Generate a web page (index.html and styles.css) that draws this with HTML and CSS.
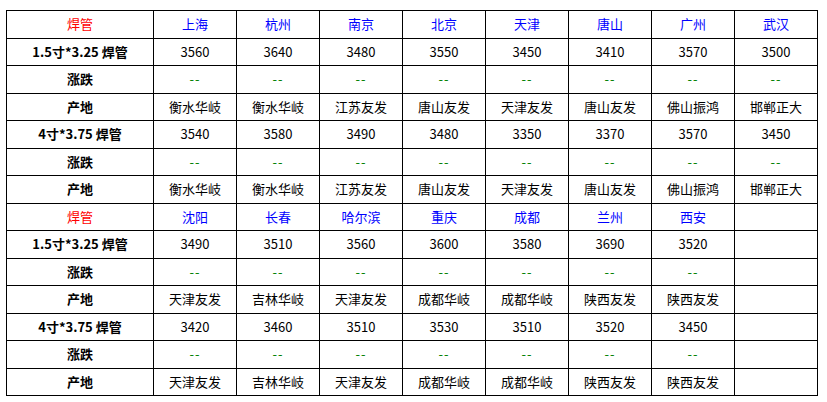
FILE: index.html
```html
<!DOCTYPE html>
<html lang="zh-CN">
<head>
<meta charset="utf-8">
<title>焊管价格</title>
<link rel="stylesheet" href="styles.css">
</head>
<body>
<table class="price-table">
  <colgroup>
    <col class="col-label">
    <col class="col-city"><col class="col-city"><col class="col-city"><col class="col-city">
    <col class="col-city"><col class="col-city"><col class="col-city"><col class="col-city">
  </colgroup>
  <tbody>
    <tr>
      <td class="head">焊管</td>
      <td class="city">上海</td><td class="city">杭州</td><td class="city">南京</td><td class="city">北京</td>
      <td class="city">天津</td><td class="city">唐山</td><td class="city">广州</td><td class="city">武汉</td>
    </tr>
    <tr>
      <td class="label">1.5寸*3.25 焊管</td>
      <td>3560</td><td>3640</td><td>3480</td><td>3550</td><td>3450</td><td>3410</td><td>3570</td><td>3500</td>
    </tr>
    <tr>
      <td class="label">涨跌</td>
      <td class="chg">--</td><td class="chg">--</td><td class="chg">--</td><td class="chg">--</td>
      <td class="chg">--</td><td class="chg">--</td><td class="chg">--</td><td class="chg">--</td>
    </tr>
    <tr>
      <td class="label">产地</td>
      <td>衡水华岐</td><td>衡水华岐</td><td>江苏友发</td><td>唐山友发</td><td>天津友发</td><td>唐山友发</td><td>佛山振鸿</td><td>邯郸正大</td>
    </tr>
    <tr>
      <td class="label">4寸*3.75 焊管</td>
      <td>3540</td><td>3580</td><td>3490</td><td>3480</td><td>3350</td><td>3370</td><td>3570</td><td>3450</td>
    </tr>
    <tr>
      <td class="label">涨跌</td>
      <td class="chg">--</td><td class="chg">--</td><td class="chg">--</td><td class="chg">--</td>
      <td class="chg">--</td><td class="chg">--</td><td class="chg">--</td><td class="chg">--</td>
    </tr>
    <tr>
      <td class="label">产地</td>
      <td>衡水华岐</td><td>衡水华岐</td><td>江苏友发</td><td>唐山友发</td><td>天津友发</td><td>唐山友发</td><td>佛山振鸿</td><td>邯郸正大</td>
    </tr>
    <tr>
      <td class="head">焊管</td>
      <td class="city">沈阳</td><td class="city">长春</td><td class="city">哈尔滨</td><td class="city">重庆</td>
      <td class="city">成都</td><td class="city">兰州</td><td class="city">西安</td><td></td>
    </tr>
    <tr>
      <td class="label">1.5寸*3.25 焊管</td>
      <td>3490</td><td>3510</td><td>3560</td><td>3600</td><td>3580</td><td>3690</td><td>3520</td><td></td>
    </tr>
    <tr>
      <td class="label">涨跌</td>
      <td class="chg">--</td><td class="chg">--</td><td class="chg">--</td><td class="chg">--</td>
      <td class="chg">--</td><td class="chg">--</td><td class="chg">--</td><td></td>
    </tr>
    <tr>
      <td class="label">产地</td>
      <td>天津友发</td><td>吉林华岐</td><td>天津友发</td><td>成都华岐</td><td>成都华岐</td><td>陕西友发</td><td>陕西友发</td><td></td>
    </tr>
    <tr>
      <td class="label">4寸*3.75 焊管</td>
      <td>3420</td><td>3460</td><td>3510</td><td>3530</td><td>3510</td><td>3520</td><td>3450</td><td></td>
    </tr>
    <tr>
      <td class="label">涨跌</td>
      <td class="chg">--</td><td class="chg">--</td><td class="chg">--</td><td class="chg">--</td>
      <td class="chg">--</td><td class="chg">--</td><td class="chg">--</td><td></td>
    </tr>
    <tr>
      <td class="label">产地</td>
      <td>天津友发</td><td>吉林华岐</td><td>天津友发</td><td>成都华岐</td><td>成都华岐</td><td>陕西友发</td><td>陕西友发</td><td></td>
    </tr>
  </tbody>
</table>
</body>
</html>
```

FILE: styles.css
```css
html, body {
  background: #ffffff;
}

body {
  margin: 10px 0 0 6px;
  font-family: "Noto Sans CJK SC", "Noto Sans", sans-serif;
  font-size: 13px;
  color: #000000;
}

.price-table {
  border-collapse: collapse;
  table-layout: fixed;
  width: 811px;
}

.col-label {
  width: 147px;
}

.col-city {
  width: 83px;
}

.price-table tr {
  height: 27.5px;
}

.price-table td {
  border: 1px solid #000000;
  padding: 0;
  text-align: center;
  vertical-align: middle;
  line-height: 16px;
  white-space: nowrap;
}

.price-table td.head {
  color: #ff0000;
  font-weight: normal;
}

.price-table td.label {
  font-weight: bold;
}

.price-table td.city {
  color: #0000ff;
}

.price-table td.chg {
  color: #008000;
  letter-spacing: 1px;
}
```
